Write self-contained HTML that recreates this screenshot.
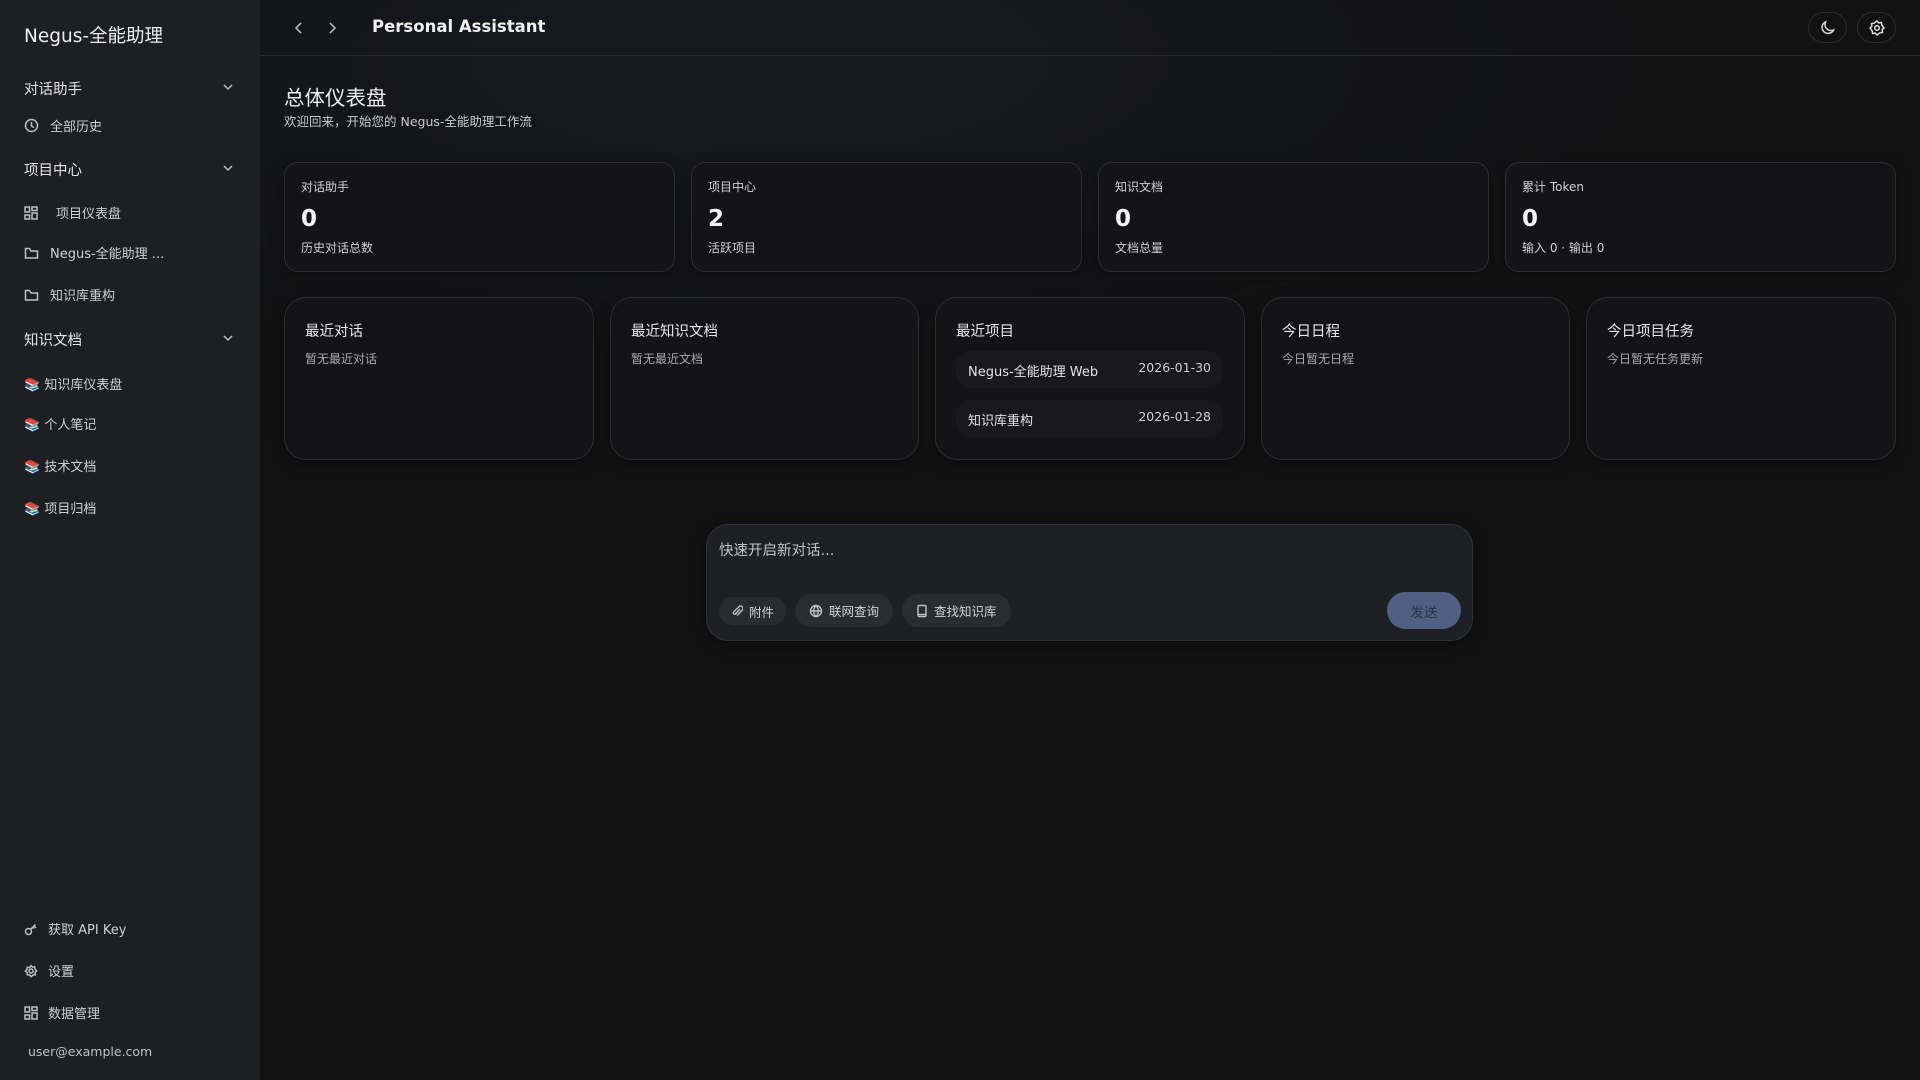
<!DOCTYPE html>
<html><head><meta charset="utf-8"><style>
*{box-sizing:border-box;margin:0;padding:0}
body{width:1920px;height:1080px;overflow:hidden;background:#121213;font-family:"DejaVu Sans","Liberation Sans","Noto Sans CJK SC",sans-serif;color:#e6e6e8;position:relative}
.a{position:absolute;white-space:nowrap}
#side{position:absolute;left:0;top:0;width:260px;height:1080px;background:#1e1f22}
#main{position:absolute;left:260px;top:0;width:1660px;height:1080px;background:radial-gradient(ellipse 900px 300px at 500px 60px,#181a22 0%,#121213 100%)}
.sec{font-size:14.5px;color:#e4e4e6}
.it{font-size:13px;color:#cfd0d3}
.ic{position:absolute;stroke:#bfc0c4;fill:none;stroke-width:1.5}
.card{position:absolute;border:1px solid #2c2d31;background:#141416;border-radius:14px;box-shadow:0 4px 14px rgba(0,0,0,.35)}
.card2{position:absolute;border:1px solid #2c2d31;background:#141416;border-radius:22px;box-shadow:0 4px 14px rgba(0,0,0,.35)}
.lbl{font-size:12px;color:#cfd0d3}
.num{font-size:23px;font-weight:bold;color:#f2f2f4}
.ttl{font-size:14.5px;color:#e6e6e8}
.sub{font-size:12px;color:#a9aaae}
.pill{position:absolute;left:20px;width:267px;height:37px;border-radius:14px;background:#19191b}
.btn{position:absolute;top:594px;height:33px;border-radius:17px;background:#2b2c30;font-size:12.5px;color:#d0d1d4;display:flex;align-items:center;gap:6px;padding:0 14px}
.btn svg{stroke:#bfc0c4;fill:none;stroke-width:1.4;flex:none}
</style></head><body>
<div id="side">
<div class="a" style="left:24px;top:22px;font-size:18.5px;color:#eee">Negus-全能助理</div>
<div class="a sec" style="left:24px;top:78px">对话助手</div>
<svg class="ic" style="left:222px;top:82px" width="12" height="10"><path d="M2 3l4 4 4-4"/></svg>
<svg class="ic" style="left:24px;top:118px" width="15" height="15"><circle cx="7.5" cy="7.5" r="6"/><path d="M7.5 4v4l2.5 1.5"/></svg>
<div class="a it" style="left:50px;top:116px">全部历史</div>
<div class="a sec" style="left:24px;top:159px">项目中心</div>
<svg class="ic" style="left:222px;top:163px" width="12" height="10"><path d="M2 3l4 4 4-4"/></svg>
<svg class="ic" style="left:24px;top:206px" width="14" height="14"><rect x="1" y="1" width="4.5" height="5"/><rect x="8" y="1" width="5" height="3.5"/><rect x="1" y="9" width="4.5" height="4"/><rect x="8" y="7" width="5" height="6"/></svg>
<div class="a it" style="left:56px;top:203px">项目仪表盘</div>
<svg class="ic" style="left:24px;top:246px" width="15" height="14"><path d="M1.5 3.5v8.5h12V5H7L5.5 2.5h-4z"/></svg>
<div class="a it" style="left:50px;top:243px">Negus-全能助理 ...</div>
<svg class="ic" style="left:24px;top:288px" width="15" height="14"><path d="M1.5 3.5v8.5h12V5H7L5.5 2.5h-4z"/></svg>
<div class="a it" style="left:50px;top:285px">知识库重构</div>
<div class="a sec" style="left:24px;top:329px">知识文档</div>
<svg class="ic" style="left:222px;top:333px" width="12" height="10"><path d="M2 3l4 4 4-4"/></svg>
<div class="a it" style="left:24px;top:374px">📚 知识库仪表盘</div>
<div class="a it" style="left:24px;top:414px">📚 个人笔记</div>
<div class="a it" style="left:24px;top:456px">📚 技术文档</div>
<div class="a it" style="left:24px;top:498px">📚 项目归档</div>
<svg class="ic" style="left:24px;top:922px" width="14" height="14"><circle cx="4.5" cy="9.5" r="3"/><path d="M6.5 7.5l5-5M10 4l2 2M9 5.5l1 1"/></svg>
<div class="a it" style="left:48px;top:919px">获取 API Key</div>
<svg class="ic" style="left:24px;top:964px" width="14" height="14"><circle cx="7" cy="7" r="2"/><path d="M7 1.5l1.5 1.6 2.2-.3.3 2.2L12.6 7l-1.6 1.5.3 2.2-2.2.3L7 12.6 5.5 11l-2.2-.3-.3-2.2L1.4 7 3 5.5l.3-2.2 2.2.3z"/></svg>
<div class="a it" style="left:48px;top:961px">设置</div>
<svg class="ic" style="left:24px;top:1006px" width="14" height="14"><rect x="1" y="1" width="4.5" height="5"/><rect x="8" y="1" width="5" height="3.5"/><rect x="1" y="9" width="4.5" height="4"/><rect x="8" y="7" width="5" height="6"/></svg>
<div class="a it" style="left:48px;top:1003px">数据管理</div>
<div class="a" style="left:28px;top:1044px;font-size:12.5px;color:#bfc0c3">user@example.com</div>
</div>
<div id="main">
<div style="position:absolute;left:0;top:55px;width:1660px;height:1px;background:#2a2b2f"></div>
<svg class="ic" style="left:32px;top:21px" width="14" height="14"><path d="M9 2L4 7l5 5"/></svg>
<svg class="ic" style="left:65px;top:21px" width="14" height="14"><path d="M5 2l5 5-5 5"/></svg>
<div class="a" style="left:112px;top:17px;font-size:16.5px;font-weight:bold;color:#f0f0f2">Personal Assistant</div>
<div style="position:absolute;left:1548px;top:12px;width:39px;height:31px;border:1px solid #2c2d31;border-radius:16px"></div>
<svg class="ic" style="left:1559px;top:19px;stroke:#ddd" width="18" height="18"><path d="M12 11.5A6 6 0 0 1 6.5 3 6 6 0 1 0 14.5 11a6 6 0 0 1-2.5.5z"/></svg>
<div style="position:absolute;left:1597px;top:12px;width:39px;height:31px;border:1px solid #2c2d31;border-radius:16px"></div>
<svg class="ic" style="left:1608px;top:19px;stroke:#ddd" width="18" height="18"><circle cx="9" cy="9" r="2.3"/><path d="M9 2l1.8 1.9 2.6-.4.4 2.6L16 9l-1.9 1.8.4 2.6-2.6.4L9 16l-1.8-1.9-2.6.4-.4-2.6L2 9l1.9-1.8-.4-2.6 2.6-.4z"/></svg>
<div class="a" style="left:24px;top:81px;font-size:20.5px;color:#eee">总体仪表盘</div>
<div class="a" style="left:24px;top:111px;font-size:12.5px;color:#c8c9cc">欢迎回来，开始您的 Negus-全能助理工作流</div>

<div class="card" style="left:24px;top:162px;width:391px;height:110px"><div class="a lbl" style="left:16px;top:15px">对话助手</div><div class="a num" style="left:16px;top:43px">0</div><div class="a lbl" style="left:16px;top:76px">历史对话总数</div></div>
<div class="card" style="left:431px;top:162px;width:391px;height:110px"><div class="a lbl" style="left:16px;top:15px">项目中心</div><div class="a num" style="left:16px;top:43px">2</div><div class="a lbl" style="left:16px;top:76px">活跃项目</div></div>
<div class="card" style="left:838px;top:162px;width:391px;height:110px"><div class="a lbl" style="left:16px;top:15px">知识文档</div><div class="a num" style="left:16px;top:43px">0</div><div class="a lbl" style="left:16px;top:76px">文档总量</div></div>
<div class="card" style="left:1245px;top:162px;width:391px;height:110px"><div class="a lbl" style="left:16px;top:15px">累计 Token</div><div class="a num" style="left:16px;top:43px">0</div><div class="a lbl" style="left:16px;top:76px">输入 0 · 输出 0</div></div>

<div class="card2" style="left:24px;top:297px;width:310px;height:163px"><div class="a ttl" style="left:20px;top:22px">最近对话</div><div class="a sub" style="left:20px;top:52px">暂无最近对话</div></div>
<div class="card2" style="left:350px;top:297px;width:309px;height:163px"><div class="a ttl" style="left:20px;top:22px">最近知识文档</div><div class="a sub" style="left:20px;top:52px">暂无最近文档</div></div>
<div class="card2" style="left:675px;top:297px;width:310px;height:163px"><div class="a ttl" style="left:20px;top:22px">最近项目</div>
<div class="pill" style="top:53px"><div class="a" style="left:12px;top:10px;font-size:13px;color:#e4e4e6">Negus-全能助理 Web</div><div class="a" style="right:12px;top:9px;font-size:12.5px;color:#cfd0d3">2026-01-30</div></div>
<div class="pill" style="top:102px"><div class="a" style="left:12px;top:10px;font-size:13px;color:#e4e4e6">知识库重构</div><div class="a" style="right:12px;top:9px;font-size:12.5px;color:#cfd0d3">2026-01-28</div></div></div>
<div class="card2" style="left:1001px;top:297px;width:309px;height:163px"><div class="a ttl" style="left:20px;top:22px">今日日程</div><div class="a sub" style="left:20px;top:52px">今日暂无日程</div></div>
<div class="card2" style="left:1326px;top:297px;width:310px;height:163px"><div class="a ttl" style="left:20px;top:22px">今日项目任务</div><div class="a sub" style="left:20px;top:52px">今日暂无任务更新</div></div>

<div style="position:absolute;left:446px;top:524px;width:767px;height:117px;border:1px solid #303136;border-radius:22px;background:#1f2023;box-shadow:0 4px 14px rgba(0,0,0,.4)"></div>
<div class="a" style="left:459px;top:539px;font-size:14.5px;color:#c3c4c7">快速开启新对话...</div>
<div class="btn" style="left:459px;top:597px;height:28px;background:#2a2b2e;padding:0 12px"><svg width="12" height="14"><path d="M9 5L4.5 10a1.5 1.5 0 0 1-2-2L8 2.5a2.5 2.5 0 0 1 3.5 3.5L6 11.5"/></svg>附件</div>
<div class="btn" style="left:535px"><svg width="14" height="14"><circle cx="7" cy="7" r="5.5"/><path d="M1.5 7h11M7 1.5c-3 3-3 8 0 11M7 1.5c3 3 3 8 0 11"/></svg>联网查询</div>
<div class="btn" style="left:642px"><svg width="12" height="14"><rect x="2" y="1.5" width="8" height="11" rx="1"/><path d="M2 10.5h8"/></svg>查找知识库</div>
<div style="position:absolute;left:1127px;top:592px;width:74px;height:37px;border-radius:19px;background:#4e6185;font-size:13.5px;color:#2a3448;display:flex;align-items:center;justify-content:center">发送</div>
</div>
</body></html>
